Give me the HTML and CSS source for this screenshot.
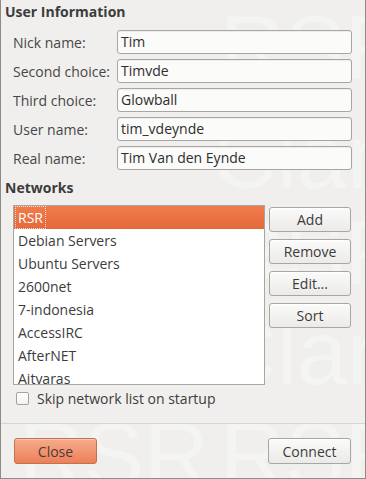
FILE: index.html
```html
<!DOCTYPE html>
<html>
<head>
<meta charset="utf-8">
<link rel="stylesheet" href="styles.css">
</head>
<body>
<div class="dialog">
  <div class="watermark" aria-hidden="true">
    <span class="wm wm1">RSR</span>
    <span class="wm wm2">Clan</span>
    <span class="wm wm3">RSR</span>
    <span class="wm wm4">Clan</span>
    <span class="wm wm5">RSR</span>
    <span class="wm wm6">RSR</span>
  </div>
  <div class="content">
    <h2 class="section-title">User Information</h2>
    <div class="form">
      <label class="lbl">Nick name:</label><div class="entry">Tim</div>
      <label class="lbl">Second choice:</label><div class="entry">Timvde</div>
      <label class="lbl">Third choice:</label><div class="entry">Glowball</div>
      <label class="lbl">User name:</label><div class="entry">tim_vdeynde</div>
      <label class="lbl">Real name:</label><div class="entry">Tim Van den Eynde</div>
    </div>
    <h2 class="section-title networks-title">Networks</h2>
    <div class="networks">
      <div class="list">
        <div class="row selected"><span class="focus">RSR</span></div>
        <div class="row">Debian Servers</div>
        <div class="row">Ubuntu Servers</div>
        <div class="row">2600net</div>
        <div class="row">7-indonesia</div>
        <div class="row">AccessIRC</div>
        <div class="row">AfterNET</div>
        <div class="row">Aitvaras</div>
      </div>
      <div class="side-buttons">
        <button class="btn">Add</button>
        <button class="btn">Remove</button>
        <button class="btn">Edit...</button>
        <button class="btn">Sort</button>
      </div>
    </div>
    <label class="check"><span class="box"></span>Skip network list on startup</label>
  </div>
  <div class="separator"></div>
  <div class="actions">
    <button class="btn btn-primary">Close</button>
    <button class="btn">Connect</button>
  </div>
</div>
</body>
</html>
```
FILE: styles.css
```css
html, body {
  margin: 0;
  padding: 0;
}
body {
  width: 366px;
  height: 479px;
  background: #f2f1f0;
  font-family: "Open Sans", "DejaVu Sans", sans-serif;
  font-size: 14px;
  color: #3c3c3c;
}
.dialog {
  position: relative;
  width: 366px;
  height: 479px;
  box-sizing: border-box;
  border: 1px solid #8e8c88;
  border-top: none;
  background: #f0efed;
  overflow: hidden;
}
.watermark {
  position: absolute;
  inset: 0;
  pointer-events: none;
  font-family: "Liberation Sans", sans-serif;
  color: rgba(255, 255, 255, 0.3);
}
.wm {
  position: absolute;
  font-size: 90px;
  line-height: 1;
}
.wm1 { left: 219px; top: 3px; }
.wm2 { left: 211px; top: 112px; }
.wm3 { left: 219px; top: 208px; }
.wm4 { left: 211px; top: 308px; }
.wm5 { left: 219px; top: 410px; }
.wm6 { left: 18px; top: 410px; }
.content {
  position: relative;
  padding: 3px 13px 0 4px;
}
.section-title {
  margin: 0;
  font-size: 14px;
  font-weight: bold;
  line-height: 18px;
  color: #3c3c3c;
}
.form {
  display: grid;
  grid-template-columns: 104px 235px;
  row-gap: 5px;
  margin: 9px 0 0 8px;
}
.lbl {
  display: flex;
  align-items: center;
  height: 24px;
  color: #474747;
  white-space: nowrap;
}
.entry {
  height: 24px;
  box-sizing: border-box;
  border: 1px solid #a8a6a2;
  border-radius: 3px;
  background: #fbfbfa;
  box-shadow: inset 0 1px 1px rgba(0, 0, 0, 0.06);
  padding: 0 3px;
  line-height: 22px;
  color: #2e2e2e;
}
.networks-title {
  margin-top: 9px;
}
.networks {
  display: flex;
  margin: 8px 0 0 8px;
  gap: 4px;
}
.list {
  width: 252px;
  height: 180px;
  box-sizing: border-box;
  border: 1px solid #a8a6a2;
  background: #ffffff;
  overflow: hidden;
}
.row {
  height: 23px;
  line-height: 23px;
  padding-left: 4px;
  color: #3c3c3c;
  white-space: nowrap;
}
.row.selected {
  background: linear-gradient(#f07d4c, #e5683a);
  color: #ffffff;
  padding-left: 1px;
}
.focus {
  display: inline-block;
  box-sizing: border-box;
  height: 23px;
  line-height: 21px;
  padding: 0 2px;
  border: 1px dotted rgba(255, 255, 255, 0.75);
}
.side-buttons {
  display: flex;
  flex-direction: column;
  gap: 7px;
  padding-top: 2px;
}
.btn {
  font-family: inherit;
  font-size: 14px;
  color: #3c3c3c;
  width: 82px;
  height: 25px;
  padding: 0;
  border: 1px solid #a8a6a2;
  border-radius: 3px;
  background: linear-gradient(#fbfbfa, #ebeae8);
  box-shadow: inset 0 1px 0 #ffffff;
}
.check {
  display: flex;
  align-items: center;
  margin: 5px 0 0 11px;
  height: 17px;
  color: #3c3c3c;
  white-space: nowrap;
}
.box {
  width: 11px;
  height: 11px;
  border: 1px solid #a4a29e;
  border-radius: 2px;
  background: linear-gradient(#ffffff, #f3f2f0);
  margin-right: 8px;
  flex: none;
}
.separator {
  position: relative;
  margin-top: 16px;
  height: 1px;
  background: #d7d5d1;
}
.actions {
  position: relative;
  display: flex;
  justify-content: space-between;
  padding: 14px 14px 0 13px;
}
.actions .btn {
  width: 83px;
  height: 26px;
}
.btn-primary {
  border-color: #c4714f;
  background: linear-gradient(#f6ab8c, #ed8058);
  box-shadow: inset 0 1px 0 rgba(255, 255, 255, 0.35);
  color: #4a3d38;
}
```
